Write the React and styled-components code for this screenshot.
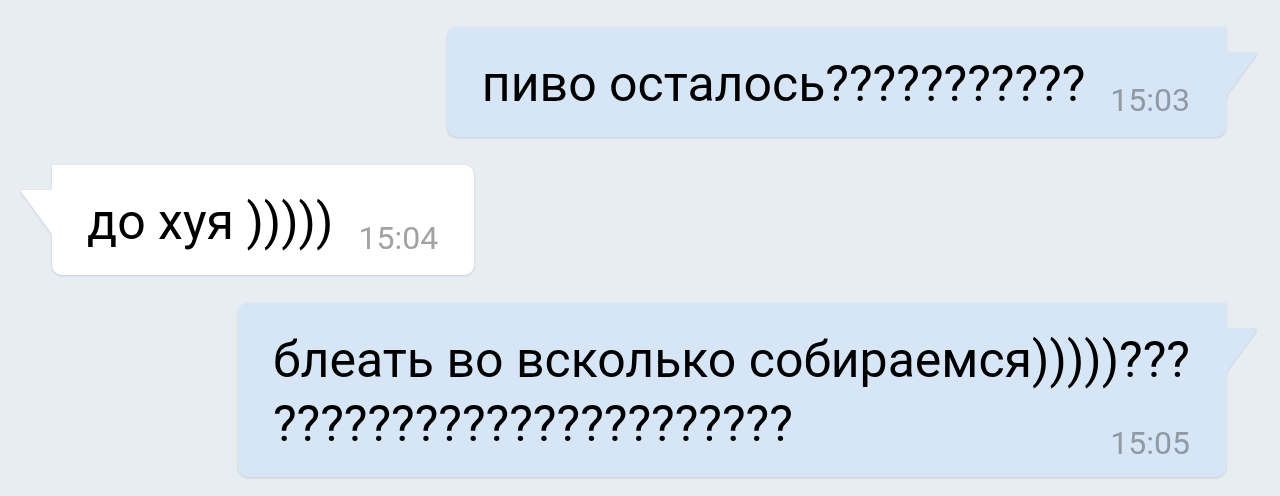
import styled, { createGlobalStyle } from "styled-components";

const GlobalStyle = createGlobalStyle`
  html, body {
    margin: 0;
    padding: 0;
    background: #e8edf2;
  }
  body {
    font-family: Roboto, "Noto Sans", Arial, sans-serif;
  }
`;

const messages = [
  { id: 1, out: true, lines: ["пиво осталось???????????"], time: "15:03" },
  { id: 2, out: false, lines: ["до хуя )))))"], time: "15:04" },
  {
    id: 3,
    out: true,
    stacked: true,
    lines: ["блеать во всколько собираемся)))))???", "??????????????????????"],
    time: "15:05",
  },
];

function Tail({ out }) {
  return (
    <TailSvg $out={out} width="32" height="46" viewBox="0 0 32 46">
      <path d="M0 0 H28 Q32 0 29.6 3.4 L6 36 Q1 42 0 46 Z" />
    </TailSvg>
  );
}

function App() {
  return (
    <>
      <GlobalStyle />
      <Chat>
        {messages.map((m) => (
          <Row key={m.id} $out={m.out}>
            <Bubble $out={m.out} $stacked={m.stacked}>
              <Tail out={m.out} />
              <Text>
                {m.lines.map((l, i) => (
                  <span key={i}>
                    {i > 0 && <br />}
                    {l}
                  </span>
                ))}
              </Text>
              <Time $out={m.out} $stacked={m.stacked}>{m.time}</Time>
            </Bubble>
          </Row>
        ))}
      </Chat>
    </>
  );
}

const Chat = styled.div`
  display: flex;
  flex-direction: column;
  gap: 28px;
  padding: 27px 54px 0 52px;
  height: 496px;
  box-sizing: border-box;
  overflow: hidden;
`;

const Row = styled.div`
  display: flex;
  justify-content: ${(p) => (p.$out ? "flex-end" : "flex-start")};
`;

const Bubble = styled.div`
  position: relative;
  display: grid;
  grid-template-columns: ${(p) => (p.$stacked ? "auto" : "auto auto")};
  column-gap: 25px;
  align-items: end;
  padding: 25px 36px 21px 35px;
  background: ${(p) => (p.$out ? "#d6e6f7" : "#ffffff")};
  border-radius: ${(p) => (p.$out ? "10px 0 10px 10px" : "0 10px 10px 10px")};
  filter: drop-shadow(0 1.5px 1px rgba(70, 90, 115, 0.22));
  color: #000;
  > * {
    grid-row: 1;
  }
  ${(p) =>
    p.$stacked &&
    `
    > * { grid-column: 1; }
  `}
`;

const TailSvg = styled.svg`
  position: absolute;
  top: 0;
  ${(p) => (p.$out ? "left: 100%;" : "right: 100%; transform: scaleX(-1);")}
  fill: ${(p) => (p.$out ? "#d6e6f7" : "#ffffff")};
`;

const Text = styled.div`
  font-size: 50px;
  line-height: 64px;
  white-space: nowrap;
`;

const Time = styled.div`
  font-size: 32px;
  line-height: 31px;
  color: ${(p) => (p.$out ? "#9199a3" : "#a3a3a3")};
  white-space: nowrap;
  ${(p) =>
    p.$stacked &&
    `
    justify-self: end;
    margin-bottom: -3px;
  `}
`;

export default App;
